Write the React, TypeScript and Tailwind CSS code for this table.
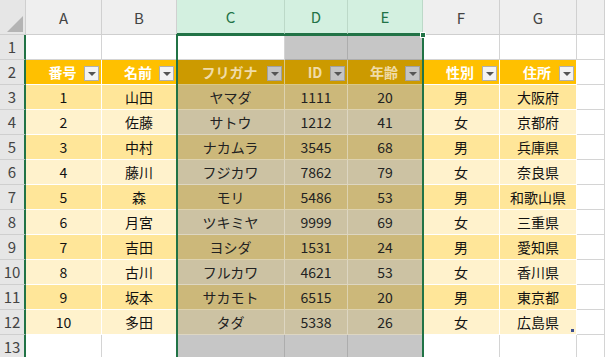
import React from 'react'

const cols = ['A', 'B', 'C', 'D', 'E', 'F', 'G', '']
const heads = ['番号', '名前', 'フリガナ', 'ID', '年齢', '性別', '住所']

const rows = [
  ['1', '山田', 'ヤマダ', '1111', '20', '男', '大阪府'],
  ['2', '佐藤', 'サトウ', '1212', '41', '女', '京都府'],
  ['3', '中村', 'ナカムラ', '3545', '68', '男', '兵庫県'],
  ['4', '藤川', 'フジカワ', '7862', '79', '女', '奈良県'],
  ['5', '森', 'モリ', '5486', '53', '男', '和歌山県'],
  ['6', '月宮', 'ツキミヤ', '9999', '69', '女', '三重県'],
  ['7', '吉田', 'ヨシダ', '1531', '24', '男', '愛知県'],
  ['8', '古川', 'フルカワ', '4621', '53', '女', '香川県'],
  ['9', '坂本', 'サカモト', '6515', '20', '男', '東京都'],
  ['10', '多田', 'タダ', '5338', '26', '女', '広島県'],
]

const isSel = (c: number) => c >= 2 && c <= 4

function RowHead({ n }: { n: number }) {
  return (
    <div className="flex items-center justify-center bg-[#e6e6e6] border-b border-[#cfcfcf] border-r-2 border-r-[#217346] text-[15px] text-[#444]">
      {n}
    </div>
  )
}

function FilterBtn({ sel }: { sel: boolean }) {
  return (
    <div
      className={`absolute right-[2px] bottom-[3px] w-[15px] h-[15px] border flex items-center justify-center ${
        sel ? 'bg-[#c4c4c4] border-[#a0a0a0]' : 'bg-[#f3f3f3] border-[#b0b0b0]'
      }`}
    >
      <div className="w-0 h-0 border-l-[4px] border-r-[4px] border-t-[4px] border-l-transparent border-r-transparent border-t-[#555] mt-[1px]" />
    </div>
  )
}

export default function App() {
  return (
    <div
      className="w-[605px] h-[357px] overflow-hidden bg-white relative"
      style={{ fontFamily: '"Noto Sans CJK JP", "Noto Sans", sans-serif' }}
    >
      <div className="grid grid-cols-[26px_76px_75px_108px_63px_75px_77px_77px_1fr] grid-rows-[35px_repeat(13,25px)]">
        {/* corner */}
        <div className="relative bg-[#e6e6e6] border-b border-r border-[#cfcfcf]">
          <div className="absolute right-[3px] bottom-[3px] w-0 h-0 border-l-[15px] border-t-[15px] border-l-transparent border-t-transparent border-b-0 border-r-[15px] border-r-transparent" />
          <div className="absolute right-[2px] bottom-[2px] w-0 h-0 border-b-[16px] border-l-[16px] border-b-[#b4b4b4] border-l-transparent" />
        </div>
        {cols.map((c, i) => (
          <div
            key={c + i}
            className={`flex items-center justify-center pt-[2px] text-[15px] border-r ${
              isSel(i)
                ? 'bg-[#d3f0e0] text-[#217346] border-r-[#bcd9c8] border-b-2 border-b-[#217346]'
                : 'bg-[#efefef] text-[#444] border-r-[#d0d0d0] border-b border-b-[#cfcfcf]'
            }`}
          >
            {c}
          </div>
        ))}

        {/* row 1 */}
        <RowHead n={1} />
        {cols.map((c, i) => (
          <div
            key={'r1' + i}
            className={`border-r border-b ${
              i === 2
                ? 'bg-white border-[#d4d4d4]'
                : isSel(i)
                ? 'bg-[#c6c6c6] border-[#adadad]'
                : 'bg-white border-[#d4d4d4]'
            }`}
          />
        ))}

        {/* row 2 headers */}
        <RowHead n={2} />
        {heads.map((h, i) => (
          <div
            key={'h' + i}
            className={`relative flex items-center justify-center pr-[2px] text-[14px] font-bold border-r border-b ${
              isSel(i)
                ? 'bg-[#cc9a00] text-[#f0dca8] border-[#d8c88a]'
                : 'bg-[#ffc000] text-white border-white'
            }`}
          >
            {h}
            <FilterBtn sel={isSel(i)} />
          </div>
        ))}
        <div className="bg-white border-r border-b border-[#d4d4d4]" />

        {/* data rows */}
        {rows.map((r, ri) => {
          const odd = ri % 2 === 0
          return (
            <React.Fragment key={'d' + ri}>
              <RowHead n={ri + 3} />
              {r.map((v, i) => {
                let cls = ''
                if (isSel(i)) {
                  cls = odd ? 'bg-[#ccb87a] text-[#222] border-[#ddd2b0]' : 'bg-[#ccc2a3] text-[#222] border-[#ddd6c2]'
                } else {
                  cls = odd ? 'bg-[#ffe699] text-[#111] border-white' : 'bg-[#fff2cc] text-[#111] border-white'
                }
                return (
                  <div
                    key={'c' + i}
                    className={`relative flex items-center justify-center text-[14px] border-r border-b ${cls}`}
                  >
                    {v}
                    {ri === 9 && i === 6 && (
                      <div className="absolute right-[2px] bottom-[2px] w-[3px] h-[3px] bg-[#3b4f8f]" />
                    )}
                  </div>
                )
              })}
              <div className="bg-white border-r border-b border-[#d4d4d4]" />
            </React.Fragment>
          )
        })}

        {/* row 13 */}
        <RowHead n={13} />
        {cols.map((c, i) => (
          <div
            key={'r13' + i}
            className={`border-r border-b ${isSel(i) ? 'bg-[#c6c6c6] border-[#adadad]' : 'bg-white border-[#d4d4d4]'}`}
          />
        ))}
      </div>

      {/* selection outline C1:E13 */}
      <div className="absolute left-[176px] top-[34px] w-[248px] h-[330px] border-2 border-[#217346] pointer-events-none" />
      <div className="absolute left-[420px] top-[32px] w-[6px] h-[6px] bg-[#217346] border border-white" />
    </div>
  )
}
